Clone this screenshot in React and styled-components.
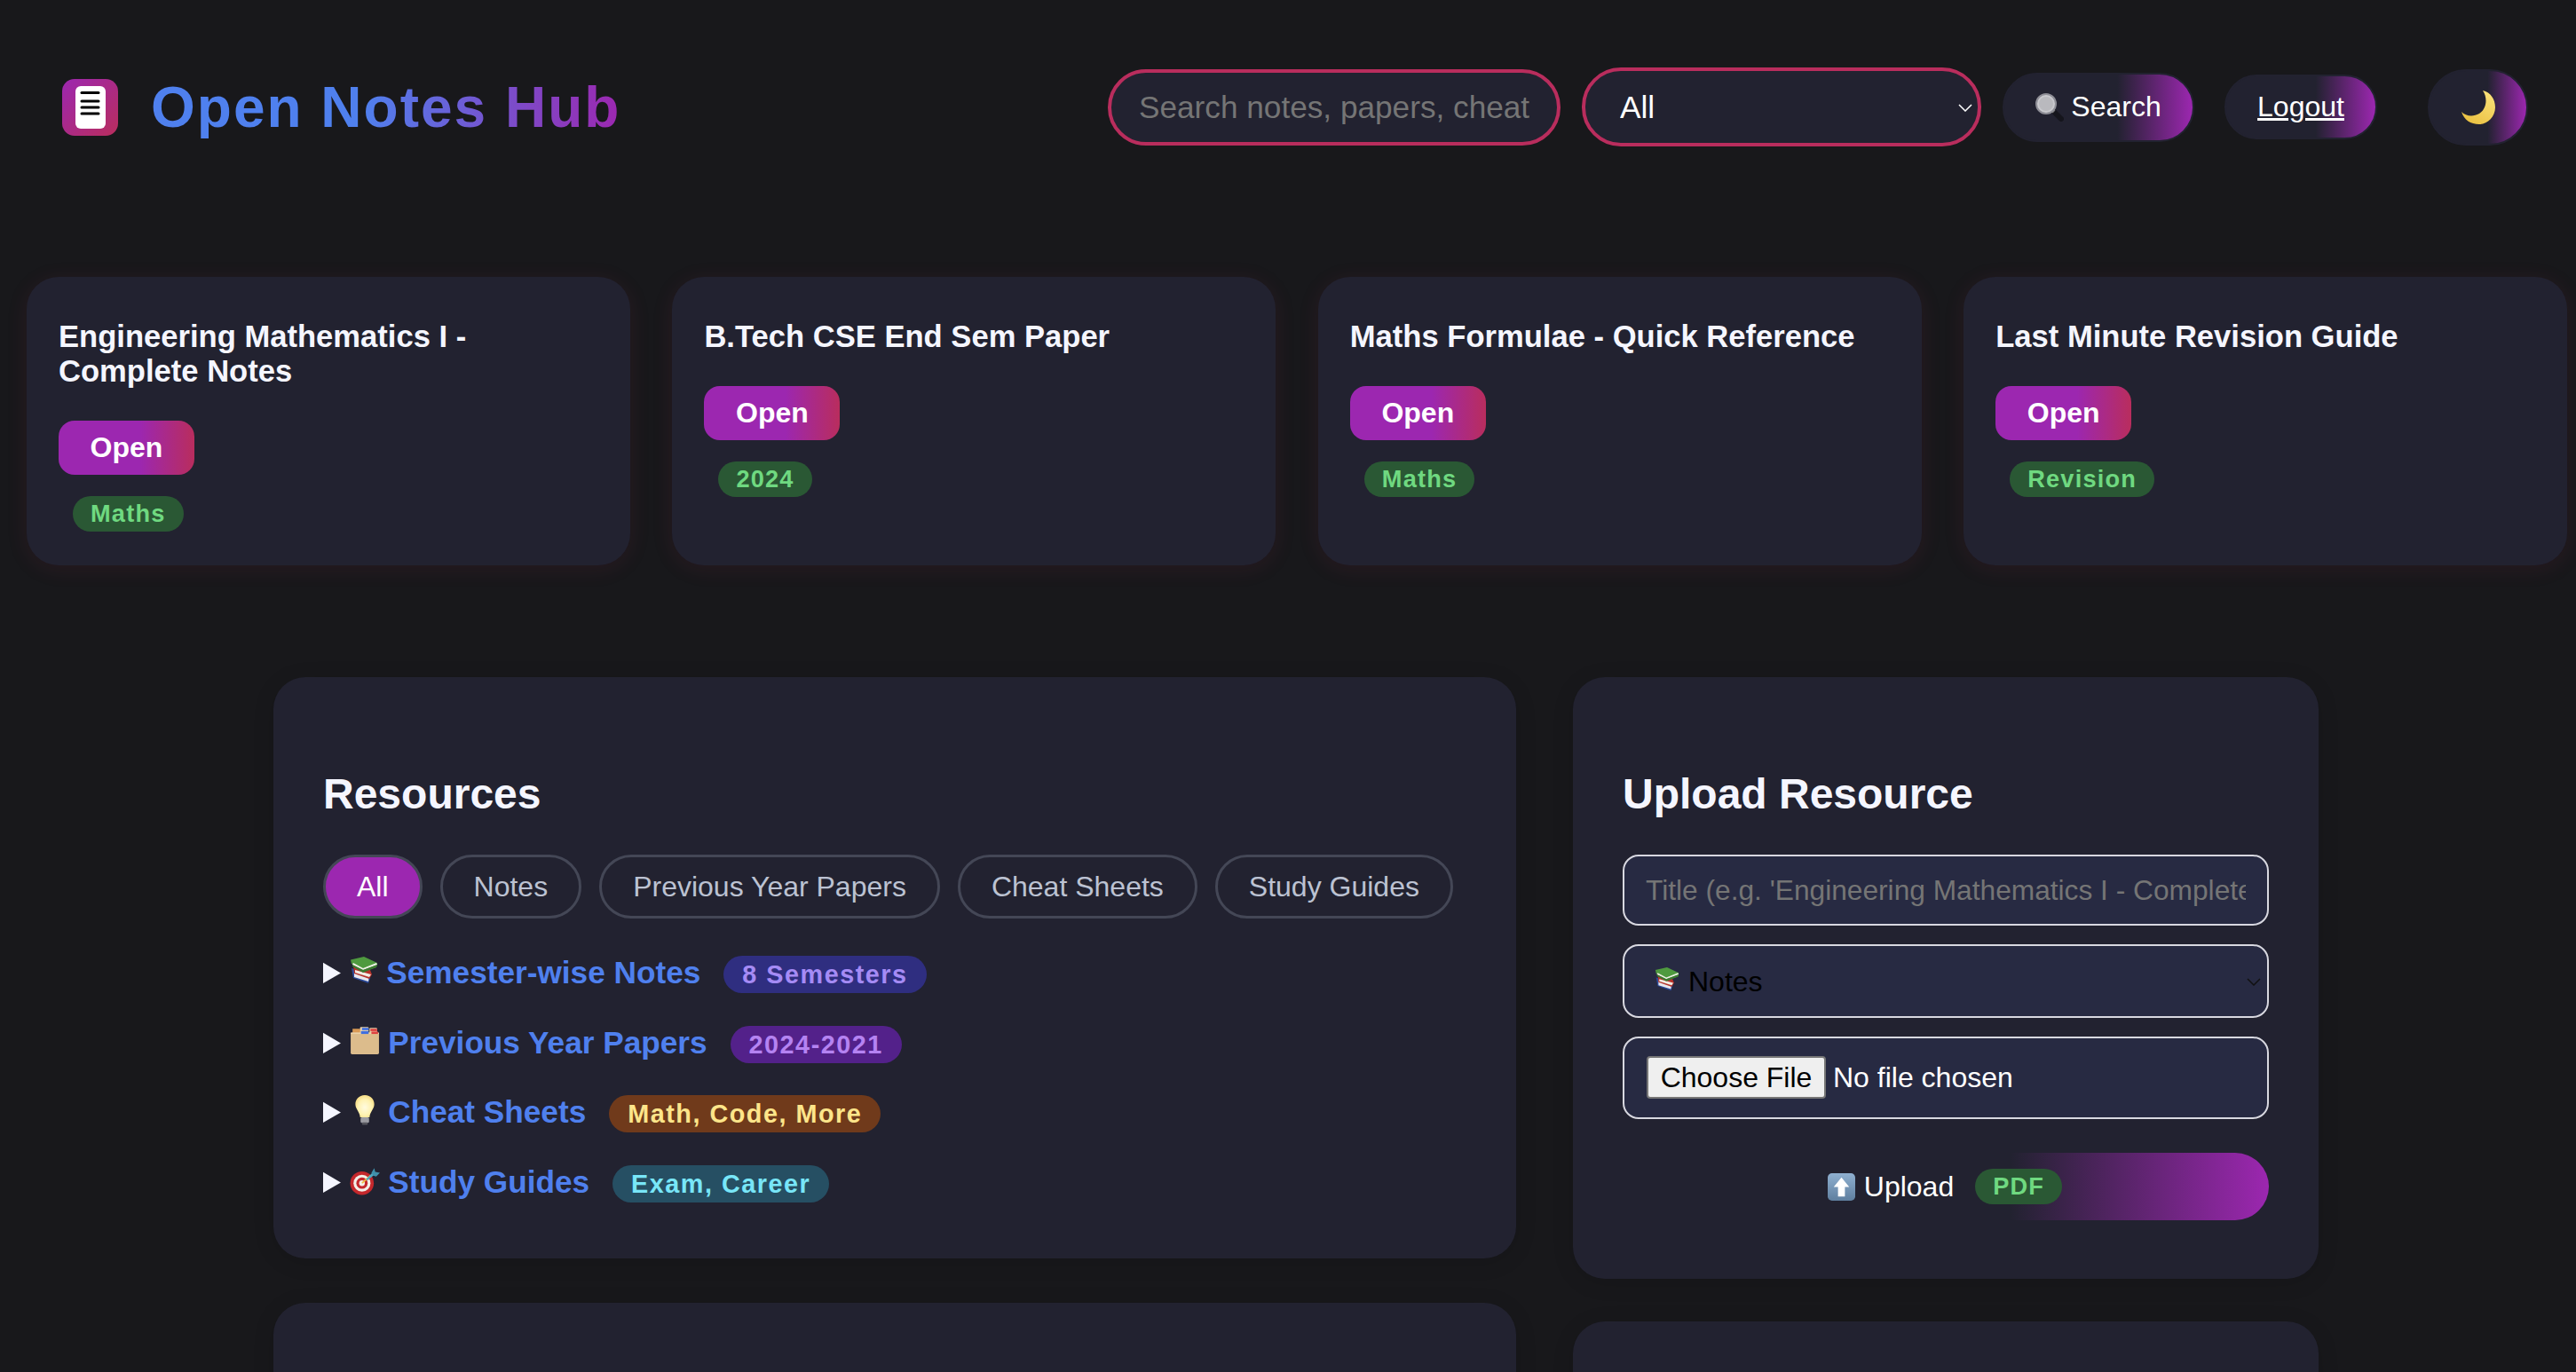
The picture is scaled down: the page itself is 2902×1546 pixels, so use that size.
import React from 'react';
import styled, { createGlobalStyle } from 'styled-components';

const CARD = '#222230';
const PURPLE = '#9c27b0';
const ROSE = '#b92d5d';
const BLUE = '#4f80ee';

const GlobalStyle = createGlobalStyle`
  html, body {
    margin: 0;
    height: 100%;
    overflow: hidden;
    background: #18181b;
  }
  body {
    font-family: "Liberation Sans", Arial, sans-serif;
    color: #f5f6ff;
  }
  * {
    box-sizing: border-box;
  }
`;

const chipTones = {
  green: { bg: '#2a5834', fg: '#6fd980' },
  indigo: { bg: '#2f2e80', fg: '#a58bf5' },
  violet: { bg: '#53218a', fg: '#b583f2' },
  amber: { bg: '#703a1b', fg: '#fde58a' },
  cyan: { bg: '#264f63', fg: '#78e6f8' },
};

const LogoIcon = () => (
  <LogoSvg viewBox="0 0 63 64">
    <defs>
      <linearGradient id="logoGrad" x1="0" y1="0" x2="1" y2="1">
        <stop offset="0" stopColor={PURPLE} />
        <stop offset="1" stopColor={ROSE} />
      </linearGradient>
    </defs>
    <rect width="63" height="64" rx="14" fill="url(#logoGrad)" />
    <rect x="15" y="8" width="34" height="48" rx="6" fill="#fff" />
    <g stroke="#000" strokeWidth="3" strokeLinecap="round">
      <path d="M22 15.5h19" />
      <path d="M22 25h19" />
      <path d="M22 32h19" />
      <path d="M22 39h19" />
    </g>
  </LogoSvg>
);

const BooksIcon = ({ small }) => (
  <Emoji viewBox="0 0 32 32" $size={small ? 28 : 32}>
    <path d="M2 13l18 6 3 5-2 6-17-6z" fill="#2b4a9a" />
    <path d="M5 15l17 5-1 8-16-5z" fill="#e8e8ee" />
    <path d="M4 9l19 6 2 5-3 5L5 19z" fill="#b5322a" />
    <path d="M6 15l18 5-2 3L6 18z" fill="#f0ece4" />
    <path d="M1 3.500 L16 0l15 7-1 5-15 5L2 8z" fill="#4f9a3f" />
    <path d="M4 7l11 6 15-6 1 2-16 6L3 9z" fill="#eef0e6" />
    <path d="M3 9l12 6v3L3 11z" fill="#3b7a30" />
    <path d="M15 15l16-6-1 3-15 6z" fill="#3b7a30" />
  </Emoji>
);

const BoxIcon = () => (
  <Emoji viewBox="0 0 32 32" $size={34}>
    <path d="M3 4h8l1 6H3z" fill="#d99a55" />
    <rect x="11" y="2" width="9" height="8" rx="1" fill="#e8d2ac" />
    <rect x="13" y="3" width="7" height="2.500" fill="#3f6fe0" />
    <rect x="21" y="3" width="8" height="7" rx="1" fill="#e8d2ac" />
    <rect x="22" y="4" width="7" height="2.500" fill="#dd4040" />
    <rect x="12" y="7" width="7" height="2.500" fill="#3f6fe0" />
    <rect x="23" y="8" width="7" height="2.500" fill="#dd4040" />
    <rect x="1" y="8" width="30" height="23" rx="1.500" fill="#dcbc8c" />
    <rect x="1" y="8" width="30" height="1.500" fill="#ead2aa" />
    <rect x="12" y="6.500" width="8" height="3" fill="#3f6fe0" />
    <rect x="23" y="7" width="7" height="2.500" fill="#dd4040" />
  </Emoji>
);

const BulbIcon = () => (
  <Emoji viewBox="0 0 32 32" $size={34}>
    <defs>
      <radialGradient id="bulbGrad" cx="0.5" cy="0.55" r="0.6">
        <stop offset="0" stopColor="#fffbe0" />
        <stop offset="0.6" stopColor="#fff2b0" />
        <stop offset="1" stopColor="#f3d67a" />
      </radialGradient>
    </defs>
    <path d="M16 0C9.500 0 6 4.800 6 9.600c0 5 4.500 8 5 14h10c.5-6 5-9 5-14C26 4.800 22.500 0 16 0z" fill="url(#bulbGrad)" />
    <rect x="11.500" y="23.500" width="9" height="6" rx="1.500" fill="#9c9ca2" />
    <rect x="13" y="29" width="6" height="2.500" rx="1" fill="#55555c" />
  </Emoji>
);

const DartIcon = () => (
  <Emoji viewBox="0 0 32 32" $size={34}>
    <circle cx="13" cy="19" r="12.500" fill="#c4282c" />
    <circle cx="13" cy="19" r="9" fill="#f3efe8" />
    <circle cx="13" cy="19" r="6" fill="#c4282c" />
    <circle cx="13" cy="19" r="3" fill="#f3efe8" />
    <path d="M13 19l9-8" stroke="#f0c040" strokeWidth="1.600" />
    <path d="M17 15l7-7 2 2-7 6z" fill="#4fa8c0" />
    <path d="M23 8l3-5 1 4 5 1-4 4-3-1z" fill="#3f90aa" />
  </Emoji>
);

const ArrowIcon = () => (
  <Emoji viewBox="0 0 32 32" $size={31}>
    <defs>
      <linearGradient id="arrowGrad" x1="0" y1="0" x2="0" y2="1">
        <stop offset="0" stopColor="#8fb0d0" />
        <stop offset="1" stopColor="#5f7f9f" />
      </linearGradient>
    </defs>
    <rect x="0" y="0" width="32" height="32" rx="5" fill="url(#arrowGrad)" />
    <path d="M16 5l9 11h-5v11h-8V16H7z" fill="#fff" />
  </Emoji>
);

const LensIcon = () => (
  <Emoji viewBox="0 0 32 32">
    <path d="M19 19l10 10" stroke="#15151c" strokeWidth="6" strokeLinecap="round" />
    <path d="M17 17l4 4" stroke="#777" strokeWidth="4" />
    <circle cx="12" cy="12" r="11" fill="#c9c9ce" stroke="#8e8e96" strokeWidth="2" />
    <circle cx="12" cy="12" r="8" fill="#b9b9be" />
  </Emoji>
);

const MoonIcon = () => (
  <Emoji viewBox="0 0 38 38" $size={38}>
    <defs>
      <linearGradient id="moonGrad" x1="0.8" y1="0" x2="0.2" y2="1">
        <stop offset="0" stopColor="#fbe27a" />
        <stop offset="1" stopColor="#e9bf3f" />
      </linearGradient>
    </defs>
    <path d="M24 0c9 2 14 10 14 19 0 11-9 19-18 19C10 38 3 33 0 24c5 5 13 6 20 2 8-5 10-17 4-26z" fill="url(#moonGrad)" />
  </Emoji>
);

const ChevronIcon = ({ $dark }) => (
  <Chevron viewBox="0 0 16 9" $dark={$dark}>
    <path d="M1 1l7 7 7-7" fill="none" stroke="currentColor" strokeWidth="1.500" />
  </Chevron>
);

const featured = [
  { title: 'Engineering Mathematics I - Complete Notes', tag: 'Maths' },
  { title: 'B.Tech CSE End Sem Paper', tag: '2024' },
  { title: 'Maths Formulae - Quick Reference', tag: 'Maths' },
  { title: 'Last Minute Revision Guide', tag: 'Revision' },
];

const tabs = ['All', 'Notes', 'Previous Year Papers', 'Cheat Sheets', 'Study Guides'];

const sections = [
  { icon: <BooksIcon />, label: 'Semester-wise Notes', chip: '8 Semesters', tone: 'indigo' },
  { icon: <BoxIcon />, label: 'Previous Year Papers', chip: '2024-2021', tone: 'violet' },
  { icon: <BulbIcon />, label: 'Cheat Sheets', chip: 'Math, Code, More', tone: 'amber' },
  { icon: <DartIcon />, label: 'Study Guides', chip: 'Exam, Career', tone: 'cyan' },
];

export default function App() {
  return (
    <>
      <GlobalStyle />
      <Header>
        <Brand>
          <LogoIcon />
          <BrandName>Open Notes Hub</BrandName>
        </Brand>
        <Controls>
          <SearchInput placeholder="Search notes, papers, cheat sheets..." />
          <SelectWrap>
            <TypeSelect defaultValue="All">
              <option>All</option>
              <option>Notes</option>
            </TypeSelect>
            <ChevronIcon />
          </SelectWrap>
          <GhostButton>
            <LensIcon /> Search
          </GhostButton>
          <LogoutLink href="#">Logout</LogoutLink>
          <ThemeButton aria-label="Toggle theme">
            <MoonIcon />
          </ThemeButton>
        </Controls>
      </Header>

      <FeaturedGrid>
        {featured.map((item) => (
          <FeaturedCard key={item.title}>
            <CardTitle>{item.title}</CardTitle>
            <OpenButton>Open</OpenButton>
            <div>
              <CardChip $tone="green">{item.tag}</CardChip>
            </div>
          </FeaturedCard>
        ))}
      </FeaturedGrid>

      <Columns>
        <Column $gap={50}>
          <Panel $bottom={65}>
            <PanelTitle>Resources</PanelTitle>
            <TabRow>
              {tabs.map((tab) => (
                <Tab key={tab} $active={tab === 'All'}>
                  {tab}
                </Tab>
              ))}
            </TabRow>
            <SectionList>
              {sections.map((section) => (
                <details key={section.label}>
                  <SectionSummary>
                    {section.icon}
                    <SectionLabel>{section.label}</SectionLabel>
                    <ListChip $tone={section.tone}>{section.chip}</ListChip>
                  </SectionSummary>
                </details>
              ))}
            </SectionList>
          </Panel>
          <EmptyPanel />
        </Column>

        <Column $gap={48}>
          <Panel $bottom={66}>
            <PanelTitle>Upload Resource</PanelTitle>
            <UploadForm onSubmit={(e) => e.preventDefault()}>
              <FormInput placeholder="Title (e.g. 'Engineering Mathematics I - Complete Notes')" />
              <SelectWrap>
                <FormSelectIcon>
                  <BooksIcon small />
                </FormSelectIcon>
                <FormSelect defaultValue="Notes">
                  <option>Notes</option>
                  <option>Previous Year Papers</option>
                </FormSelect>
                <ChevronIcon $dark />
              </SelectWrap>
              <FileInput type="file" />
              <UploadButton>
                <ArrowIcon />
                <span>Upload</span>
                <CardChip $tone="green" $flush>PDF</CardChip>
              </UploadButton>
            </UploadForm>
          </Panel>
          <EmptyPanel />
        </Column>
      </Columns>
    </>
  );
}

const Header = styled.header`
  display: flex;
  align-items: center;
  justify-content: space-between;
  padding: 76px 54px 0 70px;
`;

const Brand = styled.div`
  display: flex;
  align-items: center;
  gap: 37px;
`;

const LogoSvg = styled.svg`
  width: 63px;
  height: 64px;
  display: block;
`;

const BrandName = styled.h1`
  margin: 0;
  font-size: 64px;
  font-weight: 700;
  letter-spacing: 2px;
  line-height: 74px;
  background: linear-gradient(90deg, ${BLUE} 45%, ${PURPLE} 100%);
  -webkit-background-clip: text;
  background-clip: text;
  -webkit-text-fill-color: transparent;
`;

const Controls = styled.div`
  display: flex;
  align-items: center;
  gap: 24px;
`;

const SearchInput = styled.input`
  width: 510px;
  height: 86px;
  padding: 0 31px;
  border: 4px solid ${ROSE};
  border-radius: 43px;
  background: ${CARD};
  color: #fff;
  font: 35.2px "Liberation Sans", Arial, sans-serif;
  outline: none;
`;

const SelectWrap = styled.div`
  position: relative;
  display: block;
`;

const TypeSelect = styled.select`
  display: block;
  width: 450px;
  height: 89px;
  padding: 0 39px;
  border: 4px solid ${ROSE};
  border-radius: 44px;
  background: ${CARD};
  color: #fff;
  font: 35.2px "Liberation Sans", Arial, sans-serif;
  appearance: none;
  outline: none;
`;

const Chevron = styled.svg`
  position: absolute;
  top: 50%;
  right: ${(p) => (p.$dark ? '9px' : '10px')};
  width: 16px;
  height: 9px;
  margin-top: -4px;
  color: ${(p) => (p.$dark ? '#111' : '#fff')};
  pointer-events: none;
`;

const GhostButton = styled.button`
  display: flex;
  align-items: center;
  justify-content: center;
  gap: 8px;
  width: 216px;
  height: 78px;
  padding: 0;
  border: 2px solid ${CARD};
  border-radius: 39px;
  background: linear-gradient(90deg, ${CARD} 60%, ${PURPLE} 100%);
  color: #fff;
  font: 32px "Liberation Sans", Arial, sans-serif;
`;

const LogoutLink = styled.a`
  display: flex;
  align-items: center;
  justify-content: center;
  width: 172px;
  height: 73px;
  margin-left: 10px;
  border: 2px solid ${CARD};
  border-radius: 37px;
  background: linear-gradient(90deg, ${CARD} 60%, ${PURPLE} 100%);
  color: #fff;
  font-size: 32px;
  text-decoration: underline;
`;

const ThemeButton = styled.button`
  display: flex;
  align-items: center;
  justify-content: center;
  width: 113px;
  height: 86px;
  margin-left: 33px;
  padding: 0;
  border: 2px solid ${CARD};
  border-radius: 43px;
  background: linear-gradient(90deg, ${CARD} 60%, ${PURPLE} 100%);
`;

const Emoji = styled.svg`
  width: ${(p) => p.$size || 32}px;
  height: ${(p) => p.$size || 32}px;
  flex: none;
  vertical-align: middle;
`;

const FeaturedGrid = styled.section`
  display: grid;
  grid-template-columns: repeat(4, 680px);
  gap: 47.4px;
  margin: 147px 0 0 30px;
`;

const FeaturedCard = styled.article`
  padding: 48px 36px 38px;
  border-radius: 36px;
  background: ${CARD};
  box-shadow: 0 4px 24px rgba(185, 45, 93, 0.1);
`;

const CardTitle = styled.h3`
  margin: 0 0 36px;
  font-size: 34.6px;
  line-height: 39px;
  font-weight: 700;
`;

const OpenButton = styled.button`
  display: block;
  width: 153px;
  height: 61px;
  padding: 0;
  border: 0;
  border-radius: 18px;
  background: linear-gradient(90deg, ${PURPLE} 60%, ${ROSE} 100%);
  color: #fff;
  font: 700 32px "Liberation Sans", Arial, sans-serif;
`;

const Chip = styled.span`
  display: inline-flex;
  align-items: center;
  border-radius: 22px;
  font-weight: 700;
  letter-spacing: 1.200px;
  background: ${(p) => chipTones[p.$tone].bg};
  color: ${(p) => chipTones[p.$tone].fg};
`;

const CardChip = styled(Chip)`
  height: 40px;
  margin: 24px 0 0 16px;
  padding: 0 20px;
  font-size: 27.2px;
  ${(p) => p.$flush && 'margin: 0 0 0 14px;'}
`;

const ListChip = styled(Chip)`
  height: 42px;
  margin-left: 26px;
  padding: 0 21px;
  font-size: 28.8px;
  letter-spacing: 1.500px;
  vertical-align: 0;
`;

const Columns = styled.main`
  display: grid;
  grid-template-columns: 1400px 840px;
  gap: 64px;
  align-items: start;
  margin: 126px 0 0 308px;
`;

const Column = styled.div`
  display: flex;
  flex-direction: column;
  gap: ${(p) => p.$gap}px;
`;

const Panel = styled.section`
  padding: 102px 56px ${(p) => p.$bottom}px;
  border-radius: 36px;
  background: ${CARD};
  box-shadow: 0 4px 24px rgba(0, 0, 0, 0.12);
`;

const EmptyPanel = styled.section`
  height: 400px;
  border-radius: 36px;
  background: ${CARD};
  box-shadow: 0 4px 24px rgba(0, 0, 0, 0.12);
`;

const PanelTitle = styled.h2`
  margin: 0 0 39px;
  font-size: 48px;
  line-height: 59px;
  font-weight: 700;
`;

const TabRow = styled.div`
  display: flex;
  gap: 20px;
`;

const Tab = styled.button`
  height: 72px;
  padding: 0 35px;
  border: 3px solid #444756;
  border-radius: 36px;
  background: ${(p) => (p.$active ? PURPLE : 'transparent')};
  color: ${(p) => (p.$active ? '#fff' : '#bcc2d2')};
  font: 32px "Liberation Sans", Arial, sans-serif;
`;

const SectionList = styled.div`
  display: flex;
  flex-direction: column;
  gap: 36.700px;
  margin-top: 40px;
`;

const SectionSummary = styled.summary`
  height: 42px;
  line-height: 42px;
  font-size: 35.2px;
  font-weight: 700;
  white-space: nowrap;
  cursor: pointer;

  svg {
    margin-left: -7px;
    margin-top: -10px;
  }
`;

const SectionLabel = styled.span`
  margin-left: 9px;
  color: ${BLUE};
`;

const UploadForm = styled.form`
  display: flex;
  flex-direction: column;
  gap: 21px;
`;

const FormInput = styled.input`
  width: 100%;
  height: 80px;
  padding: 0 24px;
  border: 2px solid #d8d8e0;
  border-radius: 18px;
  background: #272a42;
  color: #fff;
  font: 31.7px "Liberation Sans", Arial, sans-serif;
  outline: none;
`;

const FormSelect = styled.select`
  display: block;
  width: 100%;
  height: 83px;
  padding: 0 24px 0 72px;
  border: 2px solid #d8d8e0;
  border-radius: 18px;
  background: #272a42;
  color: #000;
  font: 32px "Liberation Sans", Arial, sans-serif;
  appearance: none;
  outline: none;
`;

const FormSelectIcon = styled.span`
  position: absolute;
  top: 26px;
  left: 36px;
  line-height: 0;
  pointer-events: none;
`;

const FileInput = styled.input`
  width: 100%;
  height: 93px;
  padding: 20px 25px;
  border: 2px solid #d8d8e0;
  border-radius: 18px;
  background: #272a42;
  color: #fff;
  font: 32px "Liberation Sans", Arial, sans-serif;

  &::file-selector-button {
    width: 202px;
    height: 48px;
    margin-right: 8px;
    padding: 0;
    border: 2px solid #767676;
    border-radius: 4px;
    background: #efefef;
    color: #000;
    font: 32px "Liberation Sans", Arial, sans-serif;
  }
`;

const UploadButton = styled.button`
  display: flex;
  align-items: center;
  justify-content: center;
  gap: 10px;
  width: 100%;
  height: 76px;
  margin-top: 17px;
  padding: 0 2px 0 0;
  border: 0;
  border-radius: 38px;
  background: linear-gradient(90deg, ${CARD} 60%, ${PURPLE} 100%);
  color: #fff;
  font: 32px "Liberation Sans", Arial, sans-serif;
`;
